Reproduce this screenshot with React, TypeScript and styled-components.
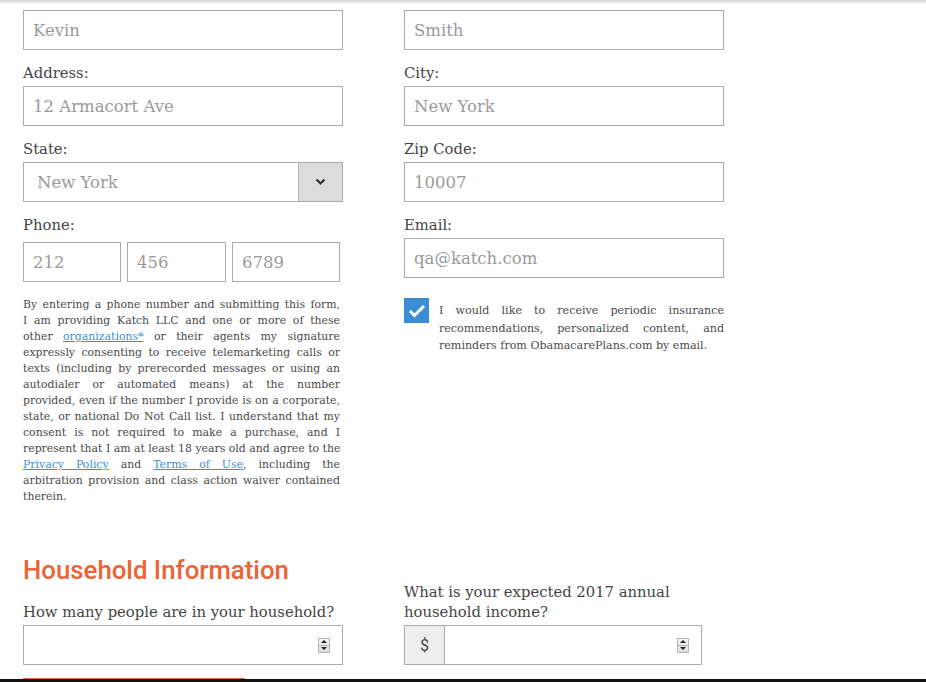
import React from "react";
import styled, { createGlobalStyle } from "styled-components";

const GlobalStyle = createGlobalStyle`
  html, body { margin: 0; padding: 0; background: #fff; overflow: hidden; }
  body { font-family: "DejaVu Serif", "Liberation Serif", serif; color: #444; }
  * { box-sizing: border-box; }
`;

const TopEdge = styled.div`
  height: 3px;
  background: linear-gradient(#d4d4d4, #ececec);
`;

const BottomEdge = styled.div`
  position: fixed;
  left: 0;
  right: 0;
  bottom: 0;
  height: 3px;
  background: #111;
`;

const Page = styled.div`
  padding: 7px 0 0 23px;
`;

const Grid = styled.div`
  display: grid;
  grid-template-columns: 320px 320px;
  column-gap: 61px;
  row-gap: 12px;
  align-items: start;
`;

const HouseholdGrid = styled(Grid)`
  align-items: end;
  margin-top: 50px;
`;

const Field = styled.div`
  display: flex;
  flex-direction: column;
`;

const Label = styled.label`
  font-size: 14.8px;
  line-height: 20px;
  padding-top: 1px;
  color: #454545;
  margin-bottom: 3px;
`;

const TextBox = styled.div<{ $w?: number }>`
  height: 40px;
  width: ${(p) => (p.$w ? `${p.$w}px` : "100%")};
  border: 1px solid #ababab;
  background: #fff;
  padding: 0 9px;
  display: flex;
  align-items: center;
  font-size: 16.5px;
  color: #9a9a9a;
  flex: none;
`;

const PhoneRow = styled.div`
  display: flex;
  gap: 6px;
  margin-top: 4px;
`;

const SelectBox = styled.div`
  height: 40px;
  border: 1px solid #ababab;
  display: flex;
  font-size: 16.5px;
  color: #9a9a9a;
`;

const SelectValue = styled.div`
  flex: 1;
  display: flex;
  align-items: center;
  padding-left: 13px;
`;

const SelectArrow = styled.div`
  width: 44px;
  background: #dcdcdc;
  border-left: 1px solid #b8b8b8;
  display: flex;
  align-items: center;
  justify-content: center;
`;

const Consent = styled.div`
  margin-top: 3px;
  width: 317px;
  font-size: 10.9px;
  line-height: 16px;
  color: #4a4a4a;
`;

const ConsentLine = styled.div<{ $last?: boolean }>`
  white-space: nowrap;
  text-align: justify;
  text-align-last: ${(p) => (p.$last ? "left" : "justify")};
`;

const Link = styled.a`
  color: #3b8fd4;
  text-decoration: underline;
`;

const CheckRow = styled.div`
  display: flex;
  align-items: flex-start;
  gap: 10px;
  margin-top: 8px;
`;

const CheckBox = styled.div`
  width: 25px;
  height: 25px;
  margin-top: -4px;
  background: #3b8ed6;
  flex: none;
  display: flex;
  align-items: center;
  justify-content: center;
`;

const CheckText = styled.p`
  margin: 0;
  font-size: 11.1px;
  line-height: 17.5px;
  text-align: justify;
  color: #4a4a4a;
`;

const Heading = styled.h2`
  margin: 0 0 16px;
  font-family: Roboto, "Liberation Sans", sans-serif;
  font-weight: 500;
  font-size: 25.8px;
  line-height: 30px;
  color: #ea6435;
`;

const NumberBox = styled.div<{ $w?: number }>`
  height: 40px;
  width: ${(p) => (p.$w ? `${p.$w}px` : "100%")};
  border: 1px solid #ababab;
  display: flex;
  align-items: center;
  justify-content: flex-end;
  padding-right: 12px;
`;

const Spinner = styled.div`
  width: 12px;
  height: 15px;
  border: 1px solid #b5b5b5;
  background: linear-gradient(#f6f6f6, #dedede);
  display: flex;
  flex-direction: column;
`;

const SpinHalf = styled.div<{ $down?: boolean }>`
  flex: 1;
  display: flex;
  align-items: center;
  justify-content: center;
  border-top: ${(p) => (p.$down ? "1px solid #b5b5b5" : "none")};
  &::after {
    content: "";
    border-left: 3px solid transparent;
    border-right: 3px solid transparent;
    ${(p) => (p.$down ? "border-top: 3px solid #222;" : "border-bottom: 3px solid #222;")}
  }
`;

const InputGroup = styled.div`
  display: flex;
  width: 298px;
`;

const Addon = styled.div`
  width: 40px;
  height: 40px;
  background: #eee;
  border: 1px solid #ababab;
  border-right: none;
  display: flex;
  align-items: center;
  justify-content: center;
  font-family: Roboto, "Liberation Sans", sans-serif;
  font-size: 16px;
  color: #444;
  flex: none;
`;

const SubmitBar = styled.div`
  margin-top: 13px;
  width: 222px;
  height: 4px;
  background: #e8643a;
`;

const NumberSpin = () => (
  <Spinner>
    <SpinHalf />
    <SpinHalf $down />
  </Spinner>
);

const consentLines: React.ReactNode[] = [
  "By entering a phone number and submitting this form,",
  "I am providing Katch LLC and one or more of these",
  <>
    other <Link href="#">organizations*</Link> or their agents my signature
  </>,
  "expressly consenting to receive telemarketing calls or",
  "texts (including by prerecorded messages or using an",
  "autodialer or automated means) at the number",
  "provided, even if the number I provide is on a corporate,",
  "state, or national Do Not Call list. I understand that my",
  "consent is not required to make a purchase, and I",
  "represent that I am at least 18 years old and agree to the",
  <>
    <Link href="#">Privacy Policy</Link> and <Link href="#">Terms of Use</Link>, including the
  </>,
  "arbitration provision and class action waiver contained",
  "therein.",
];

export default function App() {
  return (
    <>
      <GlobalStyle />
      <TopEdge />
      <Page>
        <Grid>
          <Field>
            <TextBox>Kevin</TextBox>
          </Field>
          <Field>
            <TextBox>Smith</TextBox>
          </Field>
          <Field>
            <Label>Address:</Label>
            <TextBox>12 Armacort Ave</TextBox>
          </Field>
          <Field>
            <Label>City:</Label>
            <TextBox>New York</TextBox>
          </Field>
          <Field>
            <Label>State:</Label>
            <SelectBox>
              <SelectValue>New York</SelectValue>
              <SelectArrow>
                <svg width="11" height="8" viewBox="0 0 11 8">
                  <path d="M1.5 1.5 L5.5 5.5 L9.5 1.5" fill="none" stroke="#333" strokeWidth="2.2" />
                </svg>
              </SelectArrow>
            </SelectBox>
          </Field>
          <Field>
            <Label>Zip Code:</Label>
            <TextBox>10007</TextBox>
          </Field>
          <Field>
            <Label>Phone:</Label>
            <PhoneRow>
              <TextBox $w={98}>212</TextBox>
              <TextBox $w={99}>456</TextBox>
              <TextBox $w={108}>6789</TextBox>
            </PhoneRow>
          </Field>
          <Field>
            <Label>Email:</Label>
            <TextBox>qa@katch.com</TextBox>
          </Field>
          <Field>
            <Consent>
              {consentLines.map((line, i) => (
                <ConsentLine key={i} $last={i === consentLines.length - 1}>
                  {line}
                </ConsentLine>
              ))}
            </Consent>
          </Field>
          <Field>
            <CheckRow>
              <CheckBox>
                <svg width="18" height="14" viewBox="0 0 18 14">
                  <path d="M2 7 L6.5 11.5 L16 2" fill="none" stroke="#fff" strokeWidth="3" />
                </svg>
              </CheckBox>
              <CheckText>
                I would like to receive periodic insurance recommendations, personalized content, and reminders
                from ObamacarePlans.com by email.
              </CheckText>
            </CheckRow>
          </Field>
        </Grid>
        <HouseholdGrid>
          <Field>
            <Heading>Household Information</Heading>
            <Label>How many people are in your household?</Label>
            <NumberBox>
              <NumberSpin />
            </NumberBox>
          </Field>
          <Field>
            <Label>
              What is your expected 2017 annual
              <br />
              household income?
            </Label>
            <InputGroup>
              <Addon>$</Addon>
              <NumberBox>
                <NumberSpin />
              </NumberBox>
            </InputGroup>
          </Field>
        </HouseholdGrid>
        <SubmitBar />
      </Page>
      <BottomEdge />
    </>
  );
}
